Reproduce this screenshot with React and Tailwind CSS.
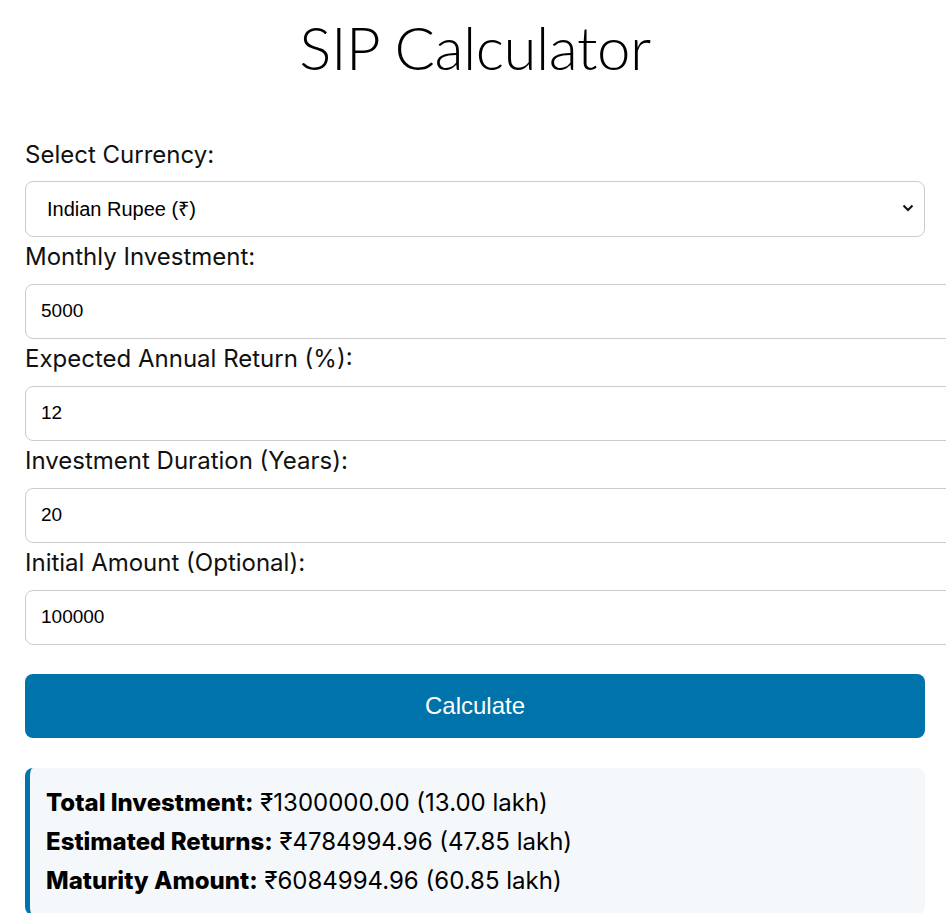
import React from "react";

function Field({ label, value }) {
  return (
    <>
      <label className="block text-[24px] leading-[30px] mb-[12px] text-[#111]">
        {label}
      </label>
      <input
        readOnly
        value={value}
        className="block box-content w-full h-[23px] py-[15px] px-[15px] mb-[5px] border border-[#cccccc] rounded-[8px] text-[19px] text-black bg-white outline-none font-['Liberation_Sans',Arial,sans-serif]"
      />
    </>
  );
}

export default function App() {
  return (
    <div className="w-[946px] min-h-[913px] overflow-hidden bg-white font-['Inter','Open_Sans',sans-serif]">
      <div className="w-[900px] ml-[25px]">
        <h1 className="text-center text-[60px] leading-[94px] mb-[46px] font-light text-black font-['Lato','Noto_Sans',sans-serif] tracking-[-0.5px]">
          SIP Calculator
        </h1>
        <label className="block text-[24px] leading-[30px] mb-[11px] text-[#111]">
          Select Currency:
        </label>
        <div className="relative mb-[5px]">
          <select
            defaultValue="INR"
            className="block w-full h-[56px] appearance-none border border-[#cccccc] rounded-[8px] pl-[21px] pr-[40px] text-[20px] text-black bg-white outline-none font-['Liberation_Sans',Arial,sans-serif]"
          >
            <option value="INR">Indian Rupee (₹)</option>
            <option value="USD">US Dollar ($)</option>
          </select>
          <svg
            className="absolute right-[11px] top-[22px] pointer-events-none"
            width="12"
            height="10"
            viewBox="0 0 12 10"
            fill="none"
          >
            <path d="M1.5 2.5 L6 7 L10.5 2.5" stroke="#111" strokeWidth="2" />
          </svg>
        </div>
        <Field label="Monthly Investment:" value="5000" />
        <Field label="Expected Annual Return (%):" value="12" />
        <Field label="Investment Duration (Years):" value="20" />
        <Field label="Initial Amount (Optional):" value="100000" />
        <button className="block w-full h-[64px] mt-[29px] rounded-[8px] bg-[#0073aa] text-white text-[24px] font-['Liberation_Sans',Arial,sans-serif]">
          Calculate
        </button>
        <div className="mt-[30px] bg-[#f5f8fb] border-l-[5px] border-[#0073aa] rounded-[8px] pl-[16px] pt-[15px] pb-[15px] text-[24px] leading-[39px] text-black">
          <div>
            <span className="font-extrabold">Total Investment:</span> ₹1300000.00 (13.00 lakh)
          </div>
          <div>
            <span className="font-extrabold">Estimated Returns:</span> ₹4784994.96 (47.85 lakh)
          </div>
          <div>
            <span className="font-extrabold">Maturity Amount:</span> ₹6084994.96 (60.85 lakh)
          </div>
        </div>
      </div>
    </div>
  );
}
